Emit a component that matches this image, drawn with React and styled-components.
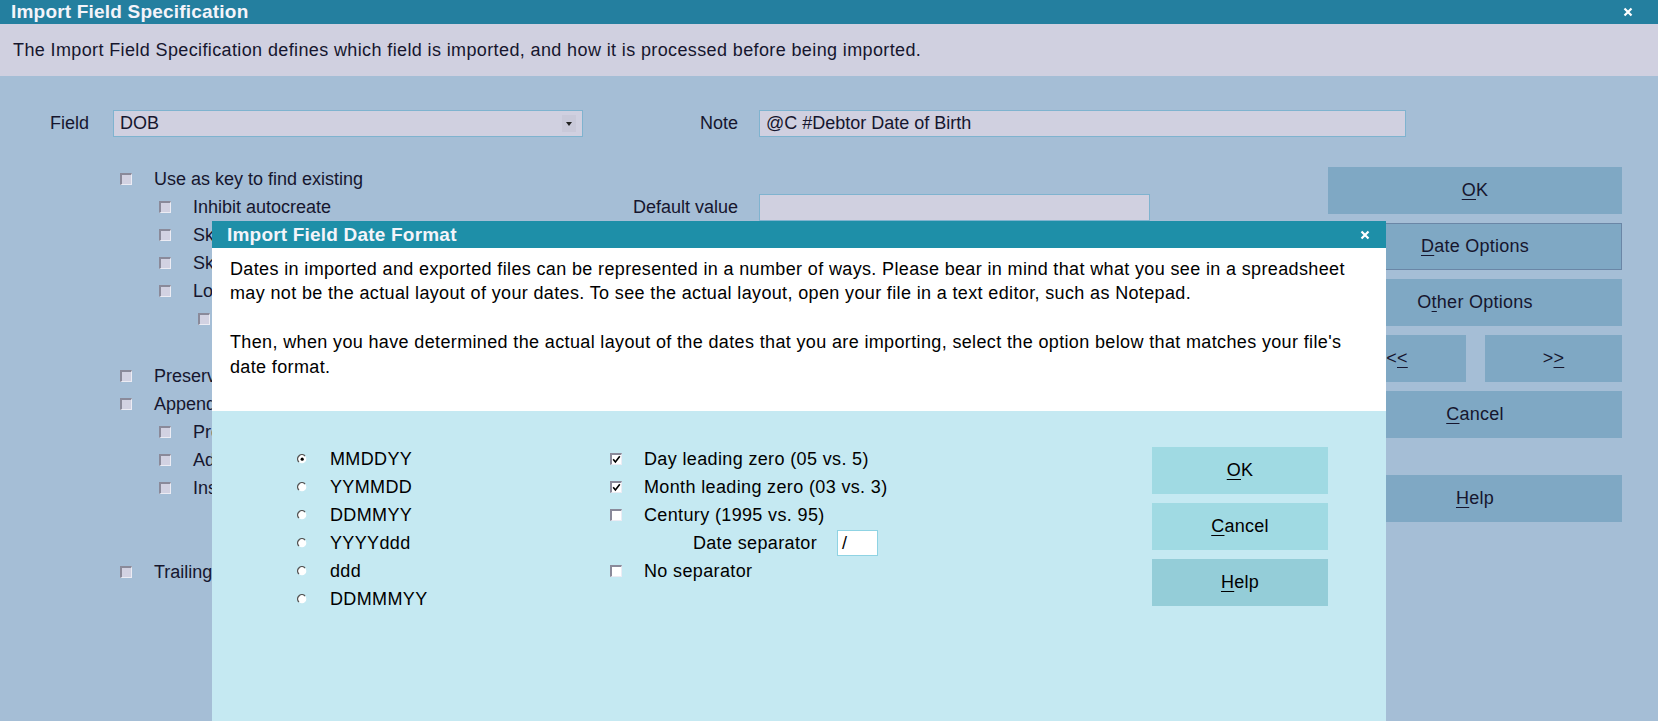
import React from "react";
import styled, { createGlobalStyle } from "styled-components";

const Global = createGlobalStyle`
  html, body { margin: 0; padding: 0; background: #a5bed6; }
  body { font-family: "Liberation Sans", Arial, sans-serif; }
`;

const Window = styled.div`
  width: 1658px;
  height: 721px;
  overflow: hidden;
  display: flex;
  flex-direction: column;
  background: #a5bed6;
  color: #16162e;
  font-size: 18px;
`;

const TitleBar = styled.div`
  height: ${(p) => p.$h || 24}px;
  flex: none;
  display: flex;
  align-items: center;
  justify-content: space-between;
  background: ${(p) => p.$bg || "#247f9f"};
  padding: 0 ${(p) => p.$padRight || 24}px 0 ${(p) => p.$padLeft || 11}px;
  color: #f4f4fa;
  font-weight: bold;
  font-size: 19px;
  letter-spacing: 0.2px;
`;

const Intro = styled.div`
  height: 52px;
  flex: none;
  display: flex;
  align-items: center;
  padding-left: 13px;
  background: #d0d0e0;
  font-size: 18px;
  letter-spacing: 0.38px;
`;

const Body = styled.div`
  flex: 1;
  position: relative;
`;

const FieldRow = styled.div`
  display: flex;
  align-items: center;
  margin-top: 34px;
  padding-left: 50px;
  height: 27px;
`;

const Label = styled.div`
  width: ${(p) => p.$w}px;
  flex: none;
  text-align: ${(p) => (p.$right ? "right" : "left")};
  margin-right: ${(p) => (p.$right ? p.$mr ?? 21 : 0)}px;
  white-space: nowrap;
`;

const Input = styled.div`
  width: ${(p) => p.$w}px;
  height: 27px;
  box-sizing: border-box;
  flex: none;
  background: #d0d0e0;
  border: 1px solid #7fb3cf;
  display: flex;
  align-items: center;
  justify-content: space-between;
  padding: 0 6px 0 6px;
  white-space: nowrap;
`;

const DropArrow = styled.div`
  width: 14px;
  height: 17px;
  background: #c9c9d9;
  display: flex;
  align-items: center;
  justify-content: center;
`;

const Columns = styled.div`
  display: flex;
  margin-top: 28px;
`;

const CheckList = styled.div`
  width: 470px;
  padding-left: 120px;
  display: flex;
  flex-direction: column;
`;

const CheckRow = styled.div`
  height: 28px;
  display: flex;
  align-items: center;
  padding-left: ${(p) => (p.$level || 0) * 39}px;
  white-space: nowrap;
  margin-top: ${(p) => p.$gap || 0}px;
`;

const Box = styled.div`
  width: 12px;
  height: 12px;
  box-sizing: border-box;
  flex: none;
  background: ${(p) => p.$bg || "#d2d2e2"};
  border-top: 2px solid #8a8a9a;
  border-left: 2px solid #8a8a9a;
  border-right: 1px solid #ececf4;
  border-bottom: 1px solid #ececf4;
  margin-right: 22px;
  display: flex;
  align-items: center;
  justify-content: center;
`;

const Middle = styled.div`
  width: 560px;
  padding-top: 28px;
`;

const MidRow = styled.div`
  height: 28px;
  display: flex;
  align-items: center;
`;

const ButtonColumn = styled.div`
  margin-left: 178px;
  width: 294px;
  padding-top: 2px;
  display: flex;
  flex-direction: column;
  gap: 9px;
`;

const Btn = styled.div`
  height: 47px;
  box-sizing: border-box;
  flex: ${(p) => (p.$grow ? 1 : "none")};
  width: ${(p) => (p.$w ? p.$w + "px" : "auto")};
  display: flex;
  align-items: center;
  justify-content: center;
  background: ${(p) => p.$bg || "#7fa8c4"};
  border: 1px solid ${(p) => (p.$focus ? "#6a86a6" : p.$bg || "#7fa8c4")};
  color: ${(p) => p.$color || "#16162e"};
  margin-top: ${(p) => p.$gap || 0}px;
  font-size: 18px;
  letter-spacing: 0.25px;
  u { text-decoration-thickness: 1px; text-underline-offset: 3px; }
`;

const BtnPair = styled.div`
  display: flex;
  gap: 19px;
`;

const Modal = styled.div`
  position: absolute;
  left: 212px;
  top: 145px;
  width: 1174px;
  bottom: 0;
  display: flex;
  flex-direction: column;
  background: #c5e9f2;
  color: #000;
  letter-spacing: 0.36px;
`;

const ModalText = styled.div`
  height: 163px;
  box-sizing: border-box;
  background: #fff;
  padding: 9px 18px 0;
  line-height: 24.4px;
  white-space: nowrap;
`;

const ModalBody = styled.div`
  display: flex;
  padding: 34px 58px 0 85px;
`;

const OptCol = styled.div`
  width: ${(p) => p.$w}px;
  display: flex;
  flex-direction: column;
`;

const OptRow = styled.div`
  height: 28px;
  display: flex;
  align-items: center;
  white-space: nowrap;
`;

const Radio = styled.svg`
  width: 10px;
  height: 10px;
  flex: none;
  margin-right: 23px;
`;

const SepInput = styled.div`
  width: 41px;
  height: 26px;
  box-sizing: border-box;
  background: #fff;
  border: 1px solid #8fd3e3;
  display: flex;
  align-items: center;
  padding-left: 4px;
`;

const ModalButtons = styled.div`
  margin-left: auto;
  padding-top: 2px;
  width: 176px;
  display: flex;
  flex-direction: column;
  gap: 9px;
`;

const CloseX = ({ size = 11 }) => (
  <svg width={size} height={size} viewBox="0 0 10 10">
    <path d="M1.5 1.5 L8.5 8.5 M8.5 1.5 L1.5 8.5" stroke="#fff" strokeWidth="2.2" />
  </svg>
);

const Check = ({ checked, bg }) => (
  <Box $bg={bg}>
    {checked && (
      <svg width="9" height="9" viewBox="0 0 9 9">
        <path d="M1.2 4.2 L3.4 7 L7.8 1.2" stroke="#000" strokeWidth="1.6" fill="none" />
      </svg>
    )}
  </Box>
);

const RadioDot = ({ on }) => (
  <Radio viewBox="0 0 10 10">
    <circle cx="5" cy="5" r="4.3" fill="#fff" />
    <path d="M8 1.9 A4.3 4.3 0 0 0 1.9 8" stroke="#555" strokeWidth="1.4" fill="none" />
    {on && <circle cx="5.2" cy="5.2" r="1.6" fill="#000" />}
  </Radio>
);

const leftChecks = [
  { t: "Use as key to find existing", l: 0 },
  { t: "Inhibit autocreate", l: 1 },
  { t: "Skip if blank", l: 1 },
  { t: "Skip if unchanged", l: 1 },
  { t: "Lookup code", l: 1 },
  { t: "Case sensitive", l: 2 },
  { t: "Preserve existing value", l: 0, gap: 29 },
  { t: "Append to existing", l: 0 },
  { t: "Prefix with space", l: 1 },
  { t: "Add date", l: 1 },
  { t: "Insert new line", l: 1 },
  { t: "Trailing spaces removed", l: 0, gap: 56 },
];

const radios = ["MMDDYY", "YYMMDD", "DDMMYY", "YYYYddd", "ddd", "DDMMMYY"];

export default function App() {
  return (
    <Window>
      <Global />
      <TitleBar $padRight={25}>
        <span>Import Field Specification</span>
        <CloseX size={10} />
      </TitleBar>
      <Intro>
        The Import Field Specification defines which field is imported, and how it is processed before being imported.
      </Intro>
      <Body>
        <FieldRow>
          <Label $w={63}>Field</Label>
          <Input $w={470}>
            DOB
            <DropArrow>
              <svg width="6" height="4" viewBox="0 0 6 4">
                <path d="M0 0 H6 L3 4 Z" fill="#222" />
              </svg>
            </DropArrow>
          </Input>
          <Label $w={155} $right>Note</Label>
          <Input $w={647}>@C #Debtor Date of Birth</Input>
        </FieldRow>
        <Columns>
          <CheckList>
            {leftChecks.map((c) => (
              <CheckRow key={c.t} $level={c.l} $gap={c.gap}>
                <Check />
                {c.t}
              </CheckRow>
            ))}
          </CheckList>
          <Middle>
            <MidRow>
              <Label $w={148} $right>Default value</Label>
              <Input $w={391} />
            </MidRow>
          </Middle>
          <ButtonColumn>
            <Btn><u>O</u>K</Btn>
            <Btn $focus><u>D</u>ate Options</Btn>
            <Btn>O<u>t</u>her Options</Btn>
            <BtnPair>
              <Btn $grow>&lt;<u>&lt;</u></Btn>
              <Btn $w={137}>&gt;<u>&gt;</u></Btn>
            </BtnPair>
            <Btn><u>C</u>ancel</Btn>
            <Btn $gap={28}><u>H</u>elp</Btn>
          </ButtonColumn>
        </Columns>

        <Modal>
          <TitleBar $bg="#1e8fa8" $padLeft={15} $padRight={16} $h={27}>
            <span>Import Field Date Format</span>
            <CloseX size={10} />
          </TitleBar>
          <ModalText>
            Dates in imported and exported files can be represented in a number of ways. Please bear in mind that what you see in a spreadsheet
            <br />
            may not be the actual layout of your dates. To see the actual layout, open your file in a text editor, such as Notepad.
            <br />
            <br />
            Then, when you have determined the actual layout of the dates that you are importing, select the option below that matches your file's
            <br />
            date format.
          </ModalText>
          <ModalBody>
            <OptCol $w={313}>
              {radios.map((r, i) => (
                <OptRow key={r}>
                  <RadioDot on={i === 0} />
                  {r}
                </OptRow>
              ))}
            </OptCol>
            <OptCol $w={400}>
              <OptRow>
                <Check checked bg="#fff" />
                Day leading zero (05 vs. 5)
              </OptRow>
              <OptRow>
                <Check checked bg="#fff" />
                Month leading zero (03 vs. 3)
              </OptRow>
              <OptRow>
                <Check bg="#fff" />
                Century (1995 vs. 95)
              </OptRow>
              <OptRow>
                <Label $w={207} $right $mr={20}>Date separator</Label>
                <SepInput>/</SepInput>
              </OptRow>
              <OptRow>
                <Check bg="#fff" />
                No separator
              </OptRow>
            </OptCol>
            <ModalButtons>
              <Btn $bg="#a0dae3" $color="#000"><u>O</u>K</Btn>
              <Btn $bg="#a0dae3" $color="#000"><u>C</u>ancel</Btn>
              <Btn $bg="#94cdd8" $color="#000"><u>H</u>elp</Btn>
            </ModalButtons>
          </ModalBody>
        </Modal>
      </Body>
    </Window>
  );
}
